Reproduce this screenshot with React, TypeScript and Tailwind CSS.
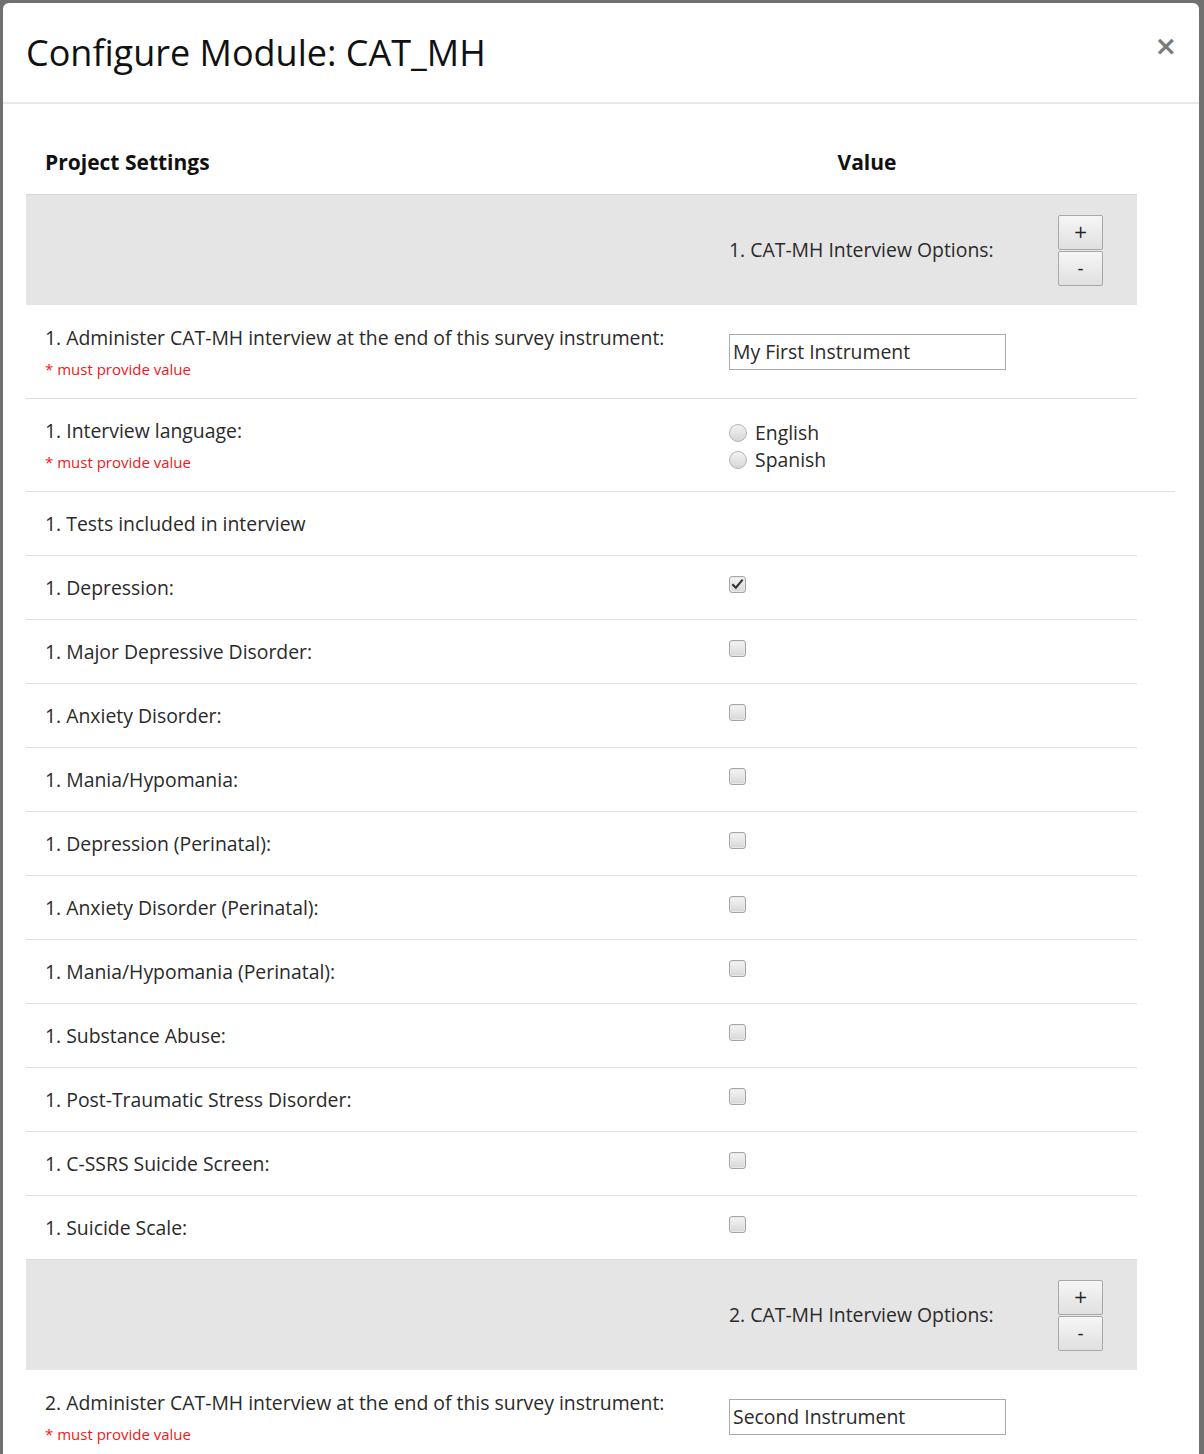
import React from "react";

const tests = [
  { label: "1. Depression:", checked: true },
  { label: "1. Major Depressive Disorder:" },
  { label: "1. Anxiety Disorder:" },
  { label: "1. Mania/Hypomania:" },
  { label: "1. Depression (Perinatal):" },
  { label: "1. Anxiety Disorder (Perinatal):" },
  { label: "1. Mania/Hypomania (Perinatal):" },
  { label: "1. Substance Abuse:" },
  { label: "1. Post-Traumatic Stress Disorder:" },
  { label: "1. C-SSRS Suicide Screen:" },
  { label: "1. Suicide Scale:" },
];

function Checkbox({ checked }: { checked?: boolean }) {
  return (
    <div className="relative w-[17px] h-[17px] rounded-[3px] border border-[#a6a6a6] bg-gradient-to-b from-[#f4f4f4] to-[#d8d8d8] shadow-[inset_0_0_0_1px_#e8e8e8]">
      {checked && (
        <svg viewBox="0 0 16 16" className="absolute left-[1px] top-[1px] w-[13px] h-[13px]">
          <path d="M2.5 8.5 L6 12 L13.5 3" fill="none" stroke="#333" strokeWidth="2.6" strokeLinecap="square" />
        </svg>
      )}
    </div>
  );
}

function Radio({ label }: { label: string }) {
  return (
    <div className="flex items-center gap-[8px] h-[27px]">
      <div className="w-[18px] h-[18px] rounded-full border border-[#b4b4b4] bg-gradient-to-b from-[#f3f3f3] to-[#d6d6d6]" />
      <span>{label}</span>
    </div>
  );
}

function PlusMinus() {
  return (
    <div className="flex flex-col gap-[1px] w-[45px] font-['DejaVu_Sans',sans-serif] text-[#222]">
      <button className="h-[35px] border border-[#a8a8a8] rounded-[2px] bg-gradient-to-b from-[#f6f6f6] to-[#e0e0e0] text-[17px] leading-none">
        +
      </button>
      <button className="h-[35px] border border-[#a8a8a8] rounded-[2px] bg-gradient-to-b from-[#f6f6f6] to-[#e0e0e0] text-[17px] leading-none">
        -
      </button>
    </div>
  );
}

function GroupRow({ n }: { n: number }) {
  return (
    <div className="flex bg-[#e5e5e5] h-[110px] items-center">
      <div className="w-[685px]" />
      <div className="w-[312px] pl-[18px] whitespace-nowrap">{n}. CAT-MH Interview Options:</div>
      <div className="flex-1 pl-[35px]">
        <PlusMinus />
      </div>
    </div>
  );
}

function Required() {
  return <div className="text-[15px] text-[#f01818] mt-[8px] leading-[20px]">* must provide value</div>;
}

function InstrumentRow({ n, value }: { n: number; value: string }) {
  return (
    <div className="flex border-b border-[#dddddd] h-[94px]">
      <div className="w-[685px] pl-[19px] pt-[20px]">
        <div className="leading-[26px] whitespace-nowrap">
          {n}. Administer CAT-MH interview at the end of this survey instrument:
        </div>
        <Required />
      </div>
      <div className="w-[312px] pl-[18px] pt-[29px]">
        <div className="w-[277px] h-[36px] border border-[#a9a9a9] px-[3px] flex items-center bg-white">
          {value}
        </div>
      </div>
    </div>
  );
}

export default function App() {
  return (
    <div className="min-h-[1454px] bg-[#707070] pt-[3px] pl-[3px] pr-[5px] font-['Open_Sans',sans-serif] text-[19.4px] text-[#2a2a2a]">
      <div className="bg-white rounded-t-[6px] min-h-[1451px]">
        <div className="flex items-start justify-between h-[101px] border-b-2 border-[#e6e9ed] pl-[23px] pr-[22px]">
          <h1 className="text-[36px] text-[#111] mt-[26px] leading-[48px]">Configure Module: CAT_MH</h1>
          <span className="mt-[29px] text-[27px] font-bold text-[#7a7a7a] font-['DejaVu_Sans',sans-serif] leading-none">
            ×
          </span>
        </div>

        <div className="pl-[23px] pt-[28px]">
          <div className="w-[1111px]">
            <div className="flex h-[63px] items-center font-bold text-[21px] text-[#111] border-b border-[#d6d6d6]">
              <div className="w-[685px] pl-[19px]">Project Settings</div>
              <div className="w-[312px] text-center">Value</div>
              <div className="flex-1" />
            </div>

            <GroupRow n={1} />
            <InstrumentRow n={1} value="My First Instrument" />

            <div className="flex h-[92px]">
              <div className="w-[685px] pl-[19px] pt-[19px]">
                <div className="leading-[26px]">1. Interview language:</div>
                <Required />
              </div>
              <div className="w-[312px] pl-[18px] pt-[20px]">
                <Radio label="English" />
                <Radio label="Spanish" />
              </div>
            </div>
            <div className="h-px bg-[#dddddd] w-[1149px]" />

            <div className="flex h-[64px] items-center border-b border-[#dddddd]">
              <div className="pl-[19px]">1. Tests included in interview</div>
            </div>

            {tests.map((t) => (
              <div key={t.label} className="flex h-[64px] items-center border-b border-[#dddddd]">
                <div className="w-[685px] pl-[19px]">{t.label}</div>
                <div className="w-[312px] pl-[18px] pb-[7px]">
                  <Checkbox checked={t.checked} />
                </div>
              </div>
            ))}

            <GroupRow n={2} />
            <InstrumentRow n={2} value="Second Instrument" />
          </div>
        </div>
      </div>
    </div>
  );
}
